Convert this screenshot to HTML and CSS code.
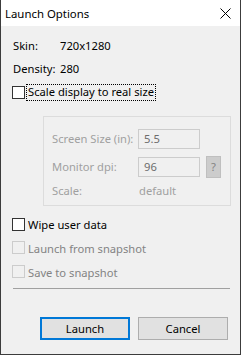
FILE: index.html
```html
<!DOCTYPE html>
<html>
<head>
<meta charset="utf-8">
<link rel="stylesheet" href="styles.css">
</head>
<body>
<div class="window">
  <div class="titlebar">
    <span class="title">Launch Options</span>
    <svg class="close" width="11" height="11" viewBox="0 0 11 11"><path d="M0.5 0.5 L10.5 10.5 M10.5 0.5 L0.5 10.5" stroke="#000" stroke-width="1" fill="none"/></svg>
  </div>
  <div class="content">
    <div class="info info-skin"><span class="info-label">Skin:</span><span>720x1280</span></div>
    <div class="info info-density"><span class="info-label">Density:</span><span>280</span></div>
    <div class="check check-scale"><span class="box"></span><span class="focus">Scale display to real size</span></div>
    <div class="group">
      <div class="grow grow-1"><span class="glabel">Screen Size (in):</span><span class="input">5.5</span></div>
      <div class="grow grow-2"><span class="glabel">Monitor dpi:</span><span class="input">96</span><span class="qbtn">?</span></div>
      <div class="grow grow-3"><span class="glabel">Scale:</span><span class="gvalue">default</span></div>
    </div>
    <div class="check check-wipe"><span class="box"></span><span>Wipe user data</span></div>
    <div class="check check-dis check-launch"><span class="box"></span><span>Launch from snapshot</span></div>
    <div class="check check-dis check-save"><span class="box"></span><span>Save to snapshot</span></div>
    <div class="sep"></div>
    <div class="buttons">
      <span class="btn btn-default">Launch</span>
      <span class="btn">Cancel</span>
    </div>
  </div>
</div>
</body>
</html>
```
FILE: styles.css
```css
html, body { margin: 0; padding: 0; }
body {
  font-family: "Noto Sans", "Open Sans", sans-serif;
  font-size: 11.2px;
  color: #000;
  background: #f0f0f0;
  white-space: nowrap;
}
.window {
  width: 241px;
  height: 355px;
  box-sizing: border-box;
  border: 1px solid #3c3c3c;
  border-top: none;
  display: flex;
  flex-direction: column;
  background: #f0f0f0;
}
.titlebar {
  height: 26px;
  background: #fff;
  display: flex;
  align-items: center;
  padding-left: 4px;
  padding-right: 9px;
  flex: none;
}
.title { flex: 1; line-height: 16px; margin-top: 1px; font-size: 11.4px; }
.close { display: block; margin-top: 1px; }
.content {
  flex: 1;
  display: flex;
  flex-direction: column;
  padding: 0 11px 0 11px;
  line-height: 16px;
}
.info { display: flex; height: 16px; padding-left: 1px; }
.info-label { width: 47px; }
.info-skin { margin-top: 12px; }
.info-density { margin-top: 7px; }
.check { display: flex; height: 16px; align-items: flex-start; }
.box {
  width: 13px; height: 13px;
  box-sizing: border-box;
  border: 1px solid #333;
  background: #fff;
  margin-top: 2px;
  margin-right: 3px;
  flex: none;
}
.check-scale { margin-top: 7px; }
.focus { outline: 1px dotted #000; outline-offset: 0px; padding: 0 1px 0 1px; margin-left: -1px; height: 15px; margin-top: 1px; line-height: 14px; }
.group {
  margin: 16px 0 0 31px;
  width: 188px;
  height: 90px;
  box-sizing: border-box;
  border: 1px solid #dcdcdc;
  padding: 12px 0 0 8px;
  display: flex;
  flex-direction: column;
  color: #a0a0a0;
}
.grow { display: flex; align-items: center; height: 20px; }
.grow-2 { margin-top: 8px; }
.grow-3 { margin-top: 6px; height: 16px; }
.glabel { width: 86px; flex: none; }
.input {
  width: 62px; height: 20px;
  box-sizing: border-box;
  border: 1px solid #cccccc;
  background: #f0f0f0;
  color: #6d6d6d;
  padding-left: 5px;
  line-height: 18px;
}
.qbtn {
  margin-left: 6px;
  width: 15px; height: 22px;
  box-sizing: border-box;
  border: 1px solid #bfbfbf;
  background: #cccccc;
  color: #838383;
  text-align: center;
  line-height: 20px;
}
.gvalue { padding-left: 1px; }
.check-wipe { margin-top: 11px; }
.check-wipe .box { margin-top: 1px; }
.check-dis { color: #838383; margin-top: 8px; }
.check-dis .box { border-color: #cccccc; background: #f0f0f0; margin-top: 0px; }
.sep {
  margin: 7px 0 0 1px;
  width: 217px;
  height: 1px;
  background: #a0a0a0;
}
.buttons {
  margin-top: 28px;
  display: flex;
  gap: 8px;
  padding-left: 28px;
}
.btn {
  width: 90px; height: 23px;
  box-sizing: border-box;
  border: 1px solid #adadad;
  background: #e1e1e1;
  text-align: center;
  line-height: 21px;
}
.btn-default { border: 2px solid #0078d7; line-height: 19px; }
```
